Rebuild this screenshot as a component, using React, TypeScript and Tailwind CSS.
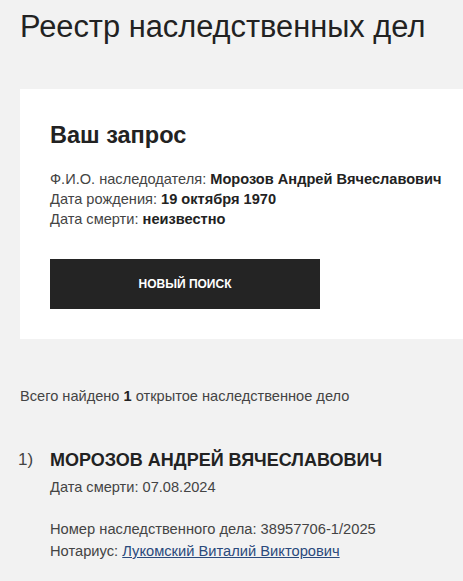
export default function App() {
  return (
    <div className="min-h-[581px] bg-[#f2f2f2] text-[#222] font-['Liberation_Sans',Arial,sans-serif] overflow-hidden">
      <h1 className="pl-5 pt-[9px] text-[30.8px] leading-[36px] text-[#222]">Реестр наследственных дел</h1>

      <div className="ml-5 mt-[44px] bg-white pl-[30px] pt-[32px] h-[250px]">
        <h2 className="text-[23.5px] leading-[28px] font-bold text-[#222]">Ваш запрос</h2>
        <div className="mt-[20px] text-[14.6px] leading-[20px] text-[#444]">
          <p>
            Ф.И.О. наследодателя: <b className="text-[#222]">Морозов Андрей Вячеславович</b>
          </p>
          <p>
            Дата рождения: <b className="text-[#222]">19 октября 1970</b>
          </p>
          <p>
            Дата смерти: <b className="text-[#222]">неизвестно</b>
          </p>
        </div>
        <button className="mt-[30px] w-[270px] h-[50px] bg-[#242424] text-white text-[12px] font-bold uppercase">
          Новый поиск
        </button>
      </div>

      <p className="pl-5 mt-[47px] text-[14.6px] leading-[20px] text-[#444]">
        Всего найдено <b className="text-[#222]">1</b> открытое наследственное дело
      </p>

      <div className="mt-[42px] flex">
        <span className="w-[50px] shrink-0 pl-[18px] text-[17px] leading-[24px] text-[#444]">1)</span>
        <div>
          <div className="text-[18px] leading-[24px] font-bold text-[#222]">МОРОЗОВ АНДРЕЙ ВЯЧЕСЛАВОВИЧ</div>
          <div className="mt-[5px] text-[14.6px] leading-[20px] text-[#444]">Дата смерти: 07.08.2024</div>
          <div className="mt-[21px] text-[14.7px] leading-[22px] text-[#444]">
            <p>Номер наследственного дела: 38957706-1/2025</p>
            <p>
              Нотариус: <a href="#" className="text-[#2b4a7c] underline">Лукомский Виталий Викторович</a>
            </p>
          </div>
        </div>
      </div>
    </div>
  );
}
